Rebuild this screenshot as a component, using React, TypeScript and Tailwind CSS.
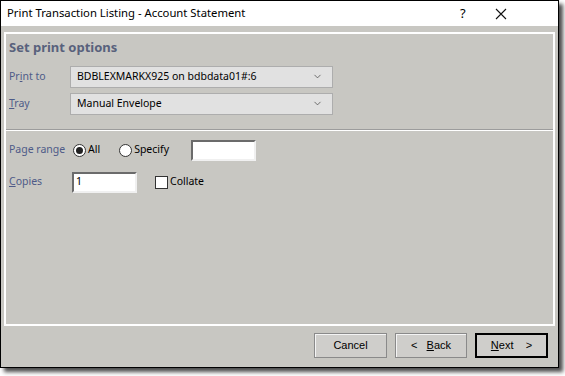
import { ChevronDown } from "lucide-react"

const ui = { fontFamily: '"Noto Sans", "Liberation Sans", sans-serif' }
const btn = { fontFamily: '"Liberation Sans", Arial, sans-serif' }

function Select({ value }: { value: string }) {
  return (
    <div className="flex h-[22px] w-[263px] items-center justify-between border border-[#adadad] bg-[#e1e1e1] pl-[6px] pr-[9px] text-[10.5px] text-black">
      <span>{value}</span>
      <ChevronDown size={11} strokeWidth={1.6} className="text-[#444]" />
    </div>
  )
}

function Radio({ checked, label }: { checked?: boolean; label: string }) {
  return (
    <div className="flex items-center gap-[2px]">
      <span className="flex h-[13px] w-[13px] items-center justify-center rounded-full border border-[#333] bg-white">
        {checked && <span className="h-[7px] w-[7px] rounded-full bg-[#222]" />}
      </span>
      <span className="text-[10.5px] text-black">{label}</span>
    </div>
  )
}

function TextBox({ value, w }: { value?: string; w: string }) {
  return (
    <div className={`flex h-[21px] items-center border-2 border-t-[#6b6b6b] border-l-[#6b6b6b] border-b-[#f0f0f0] border-r-[#f0f0f0] bg-white pl-[2px] text-[10.5px] text-black ${w}`}>
      {value}
    </div>
  )
}

export default function App() {
  return (
    <div className="h-[376px] w-[565px] bg-white" style={ui}>
      <div className="flex h-[368px] w-[559px] flex-col border border-black bg-[#c8c7c2] shadow-[4px_4px_4px_rgba(0,0,0,0.7)]">
        {/* barre de titre */}
        <div className="flex h-[25px] items-center bg-white pl-[6px] text-[11.3px] text-black">
          <span className="flex-1">Print Transaction Listing - Account Statement</span>
          <span className="w-[35px] text-[13px]">?</span>
          <svg width="12" height="12" viewBox="0 0 12 12" className="mr-[51px]">
            <path d="M1 1L11 11M11 1L1 11" stroke="#111" strokeWidth="1.1" />
          </svg>
        </div>
        <div className="h-[6px] bg-[#c8c7c2]" />

        {/* panneau principal */}
        <div className="mx-[3px] flex h-[294px] flex-col border-2 border-white">
          <div className="px-[3px] pt-[4px]">
            <div className="text-[13px] font-bold text-[#58617c]">Set print options</div>
            <div className="mt-[8px] flex items-center">
              <span className="w-[61px] text-[10.5px] text-[#4e5b88]">
                Pr<span className="underline">i</span>nt to
              </span>
              <Select value="BDBLEXMARKX925 on bdbdata01#:6" />
            </div>
            <div className="mt-[5px] flex items-center">
              <span className="w-[61px] text-[10.5px] text-[#4e5b88]">
                <span className="underline">T</span>ray
              </span>
              <Select value="Manual Envelope" />
            </div>
          </div>

          <div className="mt-[14px] border-t border-[#9c9c9c]" />
          <div className="border-t border-white" />

          <div className="px-[3px] pt-[9px]">
            <div className="flex items-center">
              <span className="w-[64px] whitespace-nowrap text-[10.5px] text-[#4e5b88]">Page range</span>
              <Radio checked label="All" />
              <div className="ml-[19px]">
                <Radio label="Specify" />
              </div>
              <div className="ml-[22px]">
                <TextBox w="w-[65px]" />
              </div>
            </div>
            <div className="mt-[11px] flex items-center">
              <span className="w-[63px] text-[10.5px] text-[#4e5b88]">
                <span className="underline">C</span>opies
              </span>
              <TextBox value="1" w="w-[65px]" />
              <div className="ml-[18px] flex items-center gap-[2px]">
                <span className="h-[13px] w-[13px] border border-[#333] bg-white" />
                <span className="text-[10.5px] text-black">Collate</span>
              </div>
            </div>
          </div>
        </div>

        {/* boutons */}
        <div className="flex justify-end gap-[8px] pr-[10px] pt-[7px] text-[11px] text-black" style={btn}>
          <button className="h-[25px] w-[73px] border border-[#8a8a8a] bg-[#cfcecb] shadow-[inset_1px_1px_0_#f4f4f4]">
            Cancel
          </button>
          <button className="h-[25px] w-[72px] border border-[#8a8a8a] bg-[#cfcecb] shadow-[inset_1px_1px_0_#f4f4f4]">
            &lt;&nbsp;&nbsp; <span className="underline">B</span>ack
          </button>
          <button className="h-[25px] w-[73px] border-2 border-black bg-[#cfcecb]">
            <span className="underline">N</span>ext&nbsp;&nbsp;&nbsp; &gt;
          </button>
        </div>
      </div>
    </div>
  )
}
